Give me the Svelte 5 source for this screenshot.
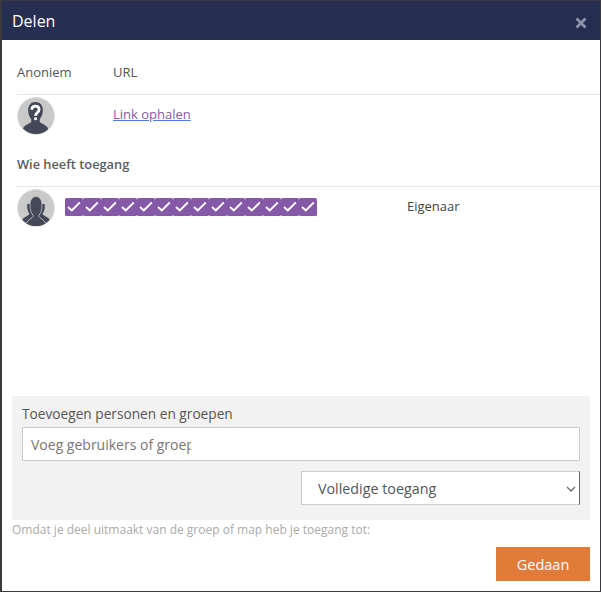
<script>
  const checks = Array.from({ length: 14 });
</script>

<div class="page">
  <div class="modal">
    <header class="head">
      <h1>Delen</h1>
      <button class="close" aria-label="Sluiten">
        <svg width="12" height="12" viewBox="0 0 12 12"><path d="M1.500 1.500l9 9M10.500 1.500l-9 9" stroke="#8f93a8" stroke-width="2.800" fill="none"/></svg>
      </button>
    </header>

    <div class="body">
      <div class="cols heading">
        <span class="c1">Anoniem</span>
        <span>URL</span>
      </div>
      <div class="cols row-anon">
        <div class="c1">
          <svg class="avatar" viewBox="0 0 38 38">
            <defs><clipPath id="a"><circle cx="19" cy="19" r="18"/></clipPath></defs>
            <circle cx="19" cy="19" r="18.500" fill="#c9c9c9" stroke="#dedede"/>
            <g clip-path="url(#a)" fill="#454858">
              <path d="M18.500 5c-5 0-7.800 4-7.300 9.500.3 3 1.300 5.500 3 7.500v3c-2 2-7 3-8.200 6.500v6.500h25v-6.500c-1.200-3.500-6.200-4.500-8.200-6.500v-3c1.700-2 2.700-4.500 3-7.500.5-5.500-2.300-9.500-7.300-9.500z"/>
            </g>
            <path d="M14.800 12.800c0-2.500 1.600-3.700 3.600-3.700s3.700 1.200 3.700 3.300c0 3.100-3.500 3.100-3.500 6.400" fill="none" stroke="#fff" stroke-width="2.700"/>
            <rect x="17.200" y="20.400" width="2.700" height="2.700" fill="#fff"/>
          </svg>
        </div>
        <a href="#link" class="link">Link ophalen</a>
      </div>

      <div class="heading who">Wie heeft toegang</div>
      <div class="row-user">
        <svg class="avatar" viewBox="0 0 38 38">
          <defs><clipPath id="b"><circle cx="19" cy="19" r="18"/></clipPath></defs>
          <circle cx="19" cy="19" r="18.500" fill="#c9c9c9" stroke="#dedede"/>
          <g clip-path="url(#b)">
            <path d="M5 38v-7c2-3 6-4 7.500-6-2-3-3-7-2-10l17 0c1 3 0 7-2 10 1.500 2 5.500 3 7.500 6v7z" fill="#454858"/>
            <path d="M9.500 38v-4c1-3.500 6-4.500 7-7-2-2.500-3.500-6-3.500-11 0-5 2.500-8.500 6-8.500s6 3.500 6 8.500c0 5-1.500 8.500-3.500 11 1 2.500 6 3.500 7 7v4z" fill="#454858" stroke="#b9b9bb" stroke-width=".9"/>
          </g>
        </svg>
        <span class="name" aria-label="verborgen naam">
          {#each checks as _}
            <span class="cell">
              <svg width="18" height="18" viewBox="0 0 18 18"><path d="M3 9l3.800 3.500 8-8" stroke="#fff" stroke-width="1.900" fill="none"/></svg>
            </span>
          {/each}
        </span>
        <span class="role">Eigenaar</span>
      </div>

      <div class="spacer"></div>

      <section class="add">
        <label for="who">Toevoegen personen en groepen</label>
        <div class="input-wrap">
          <input id="who" placeholder="Voeg gebruikers of groepen toe" />
        </div>
        <div class="select-row">
          <select>
            <option>Volledige toegang</option>
          </select>
          <svg class="chev" width="10" height="6" viewBox="0 0 10 6"><path d="M1 1l4 4 4-4" stroke="#777" stroke-width="1.500" fill="none"/></svg>
        </div>
      </section>
      <p class="note">Omdat je deel uitmaakt van de groep of map heb je toegang tot:</p>

      <div class="foot">
        <button class="done">Gedaan</button>
      </div>
    </div>
  </div>
</div>

<style>
  :global(body) {
    margin: 0;
    background: #3a3a3e;
  }
  .page {
    width: 601px;
    height: 592px;
    box-sizing: border-box;
    padding: 1px 1px 1px 2px;
    font-family: "Open Sans", sans-serif;
    color: #555;
  }
  .modal {
    height: 100%;
    display: flex;
    flex-direction: column;
    background: #fff;
  }
  .head {
    height: 39px;
    flex: none;
    box-sizing: border-box;
    background: #262e52;
    display: flex;
    align-items: center;
    justify-content: space-between;
    padding: 0 13px 0 10px;
  }
  h1 {
    margin: 0;
    font-size: 16px;
    font-weight: 400;
    color: #fff;
  }
  .close {
    background: none;
    border: 0;
    padding: 0;
    display: flex;
    margin-top: 4px;
  }
  .body {
    flex: 1;
    display: flex;
    flex-direction: column;
    padding: 0 10px 10px 10px;
  }
  .cols {
    display: flex;
  }
  .c1 {
    width: 96px;
    flex: none;
    box-sizing: border-box;
  }
  .heading {
    font-size: 13px;
    line-height: 18px;
    color: #555;
    padding-top: 23px;
    padding-bottom: 13px;
    border-bottom: 1px solid #e5e5e5;
    margin-left: 5px;
    margin-right: -10px;
  }
  .who {
    font-size: 12.800px;
    font-weight: 600;
    color: #5c5c5c;
    padding-top: 17px;
    padding-bottom: 13px;
  }
  .row-anon {
    height: 41px;
    padding-left: 5px;
    align-items: flex-start;
    padding-top: 2px;
  }
  .avatar {
    width: 38px;
    height: 38px;
    display: block;
    flex: none;
  }
  .link {
    font-size: 13px;
    line-height: 18px;
    color: #8559a8;
    text-decoration-color: #4a7fe0;
    margin-top: 8px;
  }
  .row-user {
    display: flex;
    align-items: flex-start;
    padding-left: 5px;
    padding-top: 2px;
    height: 38px;
  }
  .name {
    display: flex;
    margin-left: 10px;
    margin-top: 9px;
  }
  .cell {
    display: block;
    width: 18px;
    height: 18px;
    background: #8559a8;
    border-radius: 1.500px;
  }
  .cell svg {
    display: block;
  }
  .role {
    font-size: 13px;
    line-height: 18px;
    color: #444;
    margin-left: 90px;
    margin-top: 8px;
  }
  .spacer {
    flex: 1;
  }
  .add {
    background: #f2f2f2;
    height: 124px;
    box-sizing: border-box;
    padding: 8px 10px 0;
    display: flex;
    flex-direction: column;
  }
  label {
    font-size: 13.700px;
    line-height: 19px;
    color: #555;
    margin-bottom: 4px;
  }
  .input-wrap {
    height: 34px;
    box-sizing: border-box;
    border: 1px solid #ccc;
    background: #fff;
    padding: 0 8px;
    display: flex;
  }
  input {
    width: 160px;
    border: 0;
    outline: 0;
    padding: 0;
    background: transparent;
    font: 14px "Open Sans", sans-serif;
    color: #555;
  }
  input::placeholder {
    color: #777;
    opacity: 1;
  }
  .select-row {
    position: relative;
    display: flex;
    justify-content: flex-end;
    margin-top: 10px;
  }
  select {
    appearance: none;
    width: 279px;
    height: 34px;
    box-sizing: border-box;
    border: 1px solid #ccc;
    border-right-color: #666;
    background: #fff;
    padding: 0 16px;
    font: 14.300px "Open Sans", sans-serif;
    color: #555;
    border-radius: 0;
  }
  .chev {
    position: absolute;
    right: 4px;
    top: 15px;
    pointer-events: none;
  }
  .note {
    margin: 0;
    padding-top: 2px;
    font-size: 12px;
    line-height: 15px;
    color: #aaa;
  }
  .foot {
    display: flex;
    justify-content: flex-end;
    margin-top: 10px;
  }
  .done {
    width: 94px;
    height: 34px;
    border: 0;
    background: #e07b39;
    color: #fff;
    font: 14.500px "Open Sans", sans-serif;
  }
</style>
